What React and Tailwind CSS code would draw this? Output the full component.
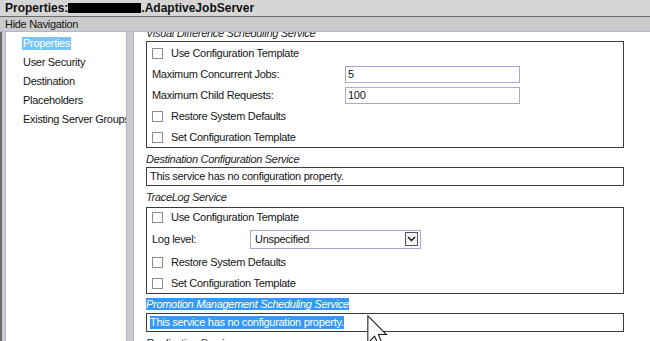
// Properties page for a job server, with the navigation tree on the left

function Check({ label }) {
  return (
    <div className="flex items-center">
      <span className="w-[11px] h-[11px] border border-[#8c8c8c] bg-white shrink-0" />
      <span className="ml-[8px]">{label}</span>
    </div>
  )
}

function Heading({ h, pb, children }) {
  return (
    <div className="flex items-end italic text-[#222]" style={{ height: h, paddingBottom: pb }}>
      <span className="leading-[14px]">{children}</span>
    </div>
  )
}

function NavItem({ label, active }) {
  return (
    <div className="h-[19px] flex items-center">
      <span className={active ? 'bg-[#78c4fc] text-white leading-[13px] px-[1px]' : 'leading-[13px] px-[1px]'}>
        {label}
      </span>
    </div>
  )
}

function Cursor() {
  return (
    <svg className="absolute left-[367px] top-[315px]" width="22" height="34" viewBox="0 0 13 20">
      <path
        d="M0.5 0.5 L0.5 16.5 L4.5 12.5 L7.2 18.7 L9.4 17.8 L6.7 11.5 L11.5 11.5 Z"
        fill="white"
        stroke="#111"
        strokeWidth="0.6"
        strokeLinejoin="miter"
      />
    </svg>
  )
}

export default function App() {
  return (
    <div className="relative w-[650px] h-[341px] overflow-hidden bg-white flex flex-col text-[11px] tracking-[-0.3px] text-[#151515] font-['Liberation_Sans',Arial,sans-serif]">
      {/* title bar */}
      <div className="h-[17px] shrink-0 bg-[#d6d6d6] border-b border-[#6c6c6c] flex items-center pl-[5px] font-bold text-[12px] tracking-normal text-[#111]">
        <span>Properties:</span>
        <span className="inline-block w-[73px] h-[10px] bg-black" />
        <span>.AdaptiveJobServer</span>
      </div>
      {/* nav toggle bar */}
      <div className="h-[15px] shrink-0 bg-[#cbcbcb] border-b border-[#b4b4dc] flex items-center pl-[5px]">
        Hide Navigation
      </div>

      <div className="flex-1 flex min-h-0">
        <div className="w-[2px] bg-[#6c6c6c]" />
        <div className="w-[3px] bg-[#cbcbcb]" />
        {/* left navigation */}
        <div className="w-[122px] bg-white border-x border-[#b4b4dc] pl-[16px] pt-[2px] overflow-hidden whitespace-nowrap">
          <NavItem label="Properties" active />
          <NavItem label="User Security" />
          <NavItem label="Destination" />
          <NavItem label="Placeholders" />
          <NavItem label="Existing Server Groups" />
        </div>
        <div className="w-[6px] bg-[#cbcbcb]" />

        {/* properties content */}
        <div className="flex-1 bg-white border-l border-[#b4b4dc] overflow-hidden pl-[12px]">
          <div className="-mt-[11px] w-[478px] whitespace-nowrap">
            <Heading h={20} pb={1}>Visual Difference Scheduling Service</Heading>
            <div className="border border-[#3c3c3c] pl-[5px]">
              <div className="h-[22px] flex items-center"><Check label="Use Configuration Template" /></div>
              <div className="h-[21px] flex items-center">
                <span className="w-[193px]">Maximum Concurrent Jobs:</span>
                <div className="w-[175px] h-[17px] border border-[#a8a8d8] flex items-center pl-[2px]">5</div>
              </div>
              <div className="h-[21px] flex items-center">
                <span className="w-[193px]">Maximum Child Requests:</span>
                <div className="w-[175px] h-[17px] border border-[#a8a8d8] flex items-center pl-[2px]">100</div>
              </div>
              <div className="h-[21px] flex items-center"><Check label="Restore System Defaults" /></div>
              <div className="h-[20px] flex items-center"><Check label="Set Configuration Template" /></div>
            </div>

            <Heading h={19} pb={1}>Destination Configuration Service</Heading>
            <div className="h-[19px] border border-[#3c3c3c] pl-[3px] flex items-center">
              This service has no configuration property.
            </div>

            <Heading h={21} pb={3}>TraceLog Service</Heading>
            <div className="border border-[#3c3c3c] pl-[5px]">
              <div className="h-[18px] flex items-center"><Check label="Use Configuration Template" /></div>
              <div className="h-[26px] flex items-center">
                <span className="w-[98px]">Log level:</span>
                <div className="w-[171px] h-[19px] border border-[#a8a8d8] flex items-center justify-between pl-[4px] pr-[2px]">
                  <span>Unspecified</span>
                  <span className="w-[13px] h-[14px] border border-[#555] bg-[#f4f4f4] flex items-center justify-center">
                    <svg width="9" height="6" viewBox="0 0 9 6">
                      <path d="M1 1 L4.5 4.5 L8 1" fill="none" stroke="#111" strokeWidth="1.4" />
                    </svg>
                  </span>
                </div>
              </div>
              <div className="h-[21px] flex items-center"><Check label="Restore System Defaults" /></div>
              <div className="h-[20px] flex items-center"><Check label="Set Configuration Template" /></div>
            </div>

            <Heading h={19} pb={2}>
              <span className="bg-[#3399ff] text-white">Promotion Management Scheduling Service</span>
            </Heading>
            <div className="h-[19px] border border-[#3c3c3c] pl-[3px] flex items-center">
              <span className="bg-[#3399ff] text-white leading-[13px]">This service has no configuration property.</span>
            </div>

            <Heading h={19} pb={1}>Replication Service</Heading>
          </div>
        </div>
      </div>

      <Cursor />
    </div>
  )
}
